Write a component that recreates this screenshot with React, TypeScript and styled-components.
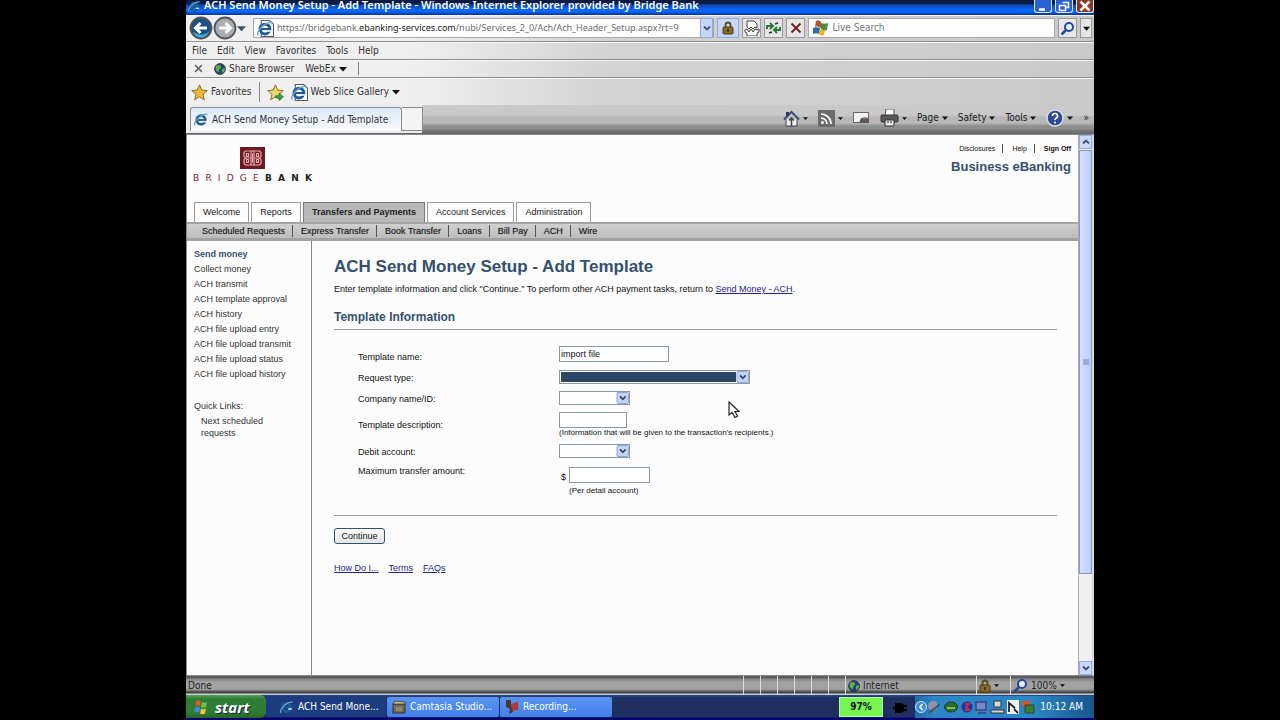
import React from 'react';
import styled, { createGlobalStyle } from 'styled-components';

const ui = '"DejaVu Sans Condensed", "DejaVu Sans", "Noto Sans", sans-serif';
const noto = '"Noto Sans", "Open Sans", sans-serif';
const arial = '"Liberation Sans", Arial, sans-serif';
const navy = '#34506f';

const GlobalStyle = createGlobalStyle`
  *, *::before, *::after { box-sizing: border-box; }
  body { margin: 0; background: #000; }
  button, input, select { font: inherit; color: inherit; margin: 0; }
  svg { display: block; flex: none; }
`;

/* ---------- desktop and window ---------- */

const Desktop = styled.div`
  min-height: 100vh;
  padding: 0 186px;
  background: #000;
  display: flex;
  flex-direction: column;
  overflow: hidden;
  font-family: ${ui};
  font-size: 10px;
  line-height: 14px;
  color: #333;
`;

const TitleBar = styled.header`
  height: 15px;
  display: flex;
  align-items: flex-start;
  gap: 3px;
  padding-left: 2px;
  background: linear-gradient(#0a1c44 0 4px, #0d4fc4 5px 7px, #0a66f8 9px 12px, #0a3aa8 14px);
`;

const TitleText = styled.h1`
  flex: 1;
  margin: 0;
  font-family: ${noto};
  font-size: 11px;
  line-height: 9px;
  font-weight: 600;
  color: #fff;
  white-space: nowrap;
`;

const WindowButtons = styled.div`
  display: flex;
  gap: 3px;
`;

const WindowButton = styled.button<{ $close?: boolean }>`
  width: 18px;
  height: 13px;
  padding: 0;
  display: grid;
  place-items: center;
  border: 1px solid #dfe8f8;
  border-top: 0;
  border-radius: 0 0 3px 3px;
  background: ${(p) => (p.$close ? '#8e3320' : '#2a62d4')};
`;

const Bar = styled.div<{ $h: number }>`
  height: ${(p) => p.$h}px;
  display: flex;
  align-items: center;
  background: linear-gradient(90deg, #efefef 0 25%, #d4d4d4 45%, #c9c9c9);
  border-bottom: 1px solid #8e8e8e;
  box-shadow: inset 0 1px #f8f8f8;
  white-space: nowrap;
`;

const NavBar = styled(Bar)`
  padding: 0 2px 0 3px;
  gap: 3px;
`;

const ToolButton = styled.button<{ $lit?: boolean; $w?: number }>`
  width: ${(p) => p.$w ?? 19}px;
  height: 20px;
  padding: 0;
  display: grid;
  place-items: center;
  flex: none;
  border: 1px solid ${(p) => (p.$lit ? '#8fa9dd' : '#9a9a9a')};
  background: ${(p) => (p.$lit ? '#c5d8fb' : '#e6e6e6')};
`;

const PlainButton = styled.button`
  padding: 0;
  border: 0;
  background: none;
  display: flex;
  align-items: center;
  gap: 3px;
`;

const HistoryButtons = styled.div`
  display: flex;
  align-items: center;
  width: 61px;
`;

const Field = styled.label<{ $grow: number }>`
  flex: ${(p) => p.$grow} 1 0;
  min-width: 0;
  height: 20px;
  display: flex;
  align-items: center;
  gap: 3px;
  padding-left: 3px;
  background: #fdfdfd;
  border: 1px solid #a9a9a9;
`;

const Address = styled.div`
  flex: 1;
  min-width: 0;
  font-family: ${noto};
  font-size: 9px;
  color: #6c6c6c;
  b { font-weight: 400; color: #222; }
`;

const SearchInput = styled.input`
  flex: 1;
  min-width: 0;
  padding: 0;
  border: 0;
  outline: 0;
  background: none;
  &::placeholder { color: #777; opacity: 1; }
`;

const MenuBar = styled(Bar)`
  padding: 1px 0 0 6px;
  gap: 10px;
`;

const ShareBar = styled(Bar)`
  padding-left: 8px;
  gap: 11px;
`;

const Divider = styled.span<{ $h: number }>`
  width: 1px;
  height: ${(p) => p.$h}px;
  background: #888;
`;

const FavoritesBar = styled(Bar)`
  padding: 1px 0 0 5px;
  gap: 7px;
  border-bottom: 0;
`;

const TabBar = styled.div`
  height: 29px;
  display: flex;
  align-items: flex-end;
  background:
    linear-gradient(90deg, #ececec 0 26%, transparent 26%),
    linear-gradient(#c9c9c9 0 10px, #b8b8b8 12px 18px, #8e8e8e 21px 24px, #707070 26px);
  border-bottom: 1px solid #666;
  padding: 0 0 2px 4px;
`;

const BrowserTab = styled.div`
  width: 212px;
  flex: none;
  height: 24px;
  display: flex;
  align-items: center;
  gap: 3px;
  padding-left: 3px;
  white-space: nowrap;
  background: linear-gradient(#dde9fc, #fafcff);
  border: 1px solid #8b8b8b;
  border-bottom: 0;
  border-radius: 3px 3px 0 0;
`;

const NewTab = styled.button`
  width: 21px;
  height: 24px;
  padding: 0;
  background: #f3f3f3;
  border: 1px solid #8b8b8b;
  border-left: 0;
`;

const Commands = styled.div`
  flex: 1;
  align-self: center;
  display: flex;
  align-items: center;
  justify-content: flex-end;
  gap: 10px;
  padding-right: 5px;
  color: #222;
`;

/* ---------- page ---------- */

const Viewport = styled.div`
  flex: 1;
  display: flex;
  background: #fcfcfc;
  border: 1px solid #888;
  border-right: 2px solid #d8d8d8;
`;

const Page = styled.div`
  flex: 1;
  min-width: 0;
  display: flex;
  flex-direction: column;
  font-family: ${arial};
  color: #222;
`;

const Masthead = styled.header`
  display: flex;
  justify-content: space-between;
  height: 67px;
  padding: 12px 7px 0 6px;
`;

const Brand = styled.div`
  width: 119px;
  display: flex;
  flex-direction: column;
  align-items: center;
  gap: 4px;
`;

const BrandName = styled.div`
  display: flex;
  justify-content: space-between;
  width: 119px;
  font-family: "DejaVu Sans", sans-serif;
  font-size: 9px;
  line-height: 11px;
  color: #7a2630;
  b { font-weight: 700; color: #222; }
`;

const Utility = styled.div`
  display: flex;
  flex-direction: column;
  align-items: flex-end;
`;

const UtilityLinks = styled.nav`
  display: flex;
  font-size: 7px;
  line-height: 9px;
  margin-top: -3px;
  a { color: #111; text-decoration: none; }
  a + a { margin-left: 7px; padding-left: 9px; border-left: 1px solid #555; }
  a:last-child { font-weight: 700; }
`;

const Product = styled.div`
  margin-top: 6px;
  font-size: 13px;
  line-height: 16px;
  font-weight: 700;
  color: ${navy};
`;

const Tabs = styled.nav`
  display: flex;
  align-items: flex-end;
  gap: 2px;
  padding-left: 7px;
`;

const TabLink = styled.a<{ $on?: boolean }>`
  height: 20px;
  padding: 0 8px;
  line-height: 19px;
  font-size: 9px;
  text-decoration: none;
  white-space: nowrap;
  color: #222;
  border: 1px solid #999;
  border-bottom: 0;
  ${(p) => p.$on && 'background: #b9b9b9; font-weight: 700; border-color: #777;'}
`;

const SubNav = styled.nav`
  display: flex;
  align-items: center;
  height: 19px;
  padding-left: 7px;
  font-size: 9px;
  line-height: 12px;
  background: linear-gradient(#cfcfcf, #bdbdbd);
  border-top: 2px solid #a4a4a4;
  border-bottom: 3px solid #a2a2a2;
  a { padding: 0 7px 0 8px; color: #222; text-decoration: none; text-shadow: 0 0 1px #777; white-space: nowrap; }
  a + a { border-left: 1px solid #555; }
`;

const Columns = styled.div`
  flex: 1;
  display: flex;
`;

const Sidebar = styled.aside`
  width: 125px;
  flex: none;
  padding: 6px 0 0 7px;
  border-right: 1px solid #888;
  font-size: 9px;
  line-height: 15px;
`;

const SideList = styled.ul`
  list-style: none;
  margin: 0;
  padding: 0;
  a { color: #333; text-decoration: none; white-space: nowrap; }
  a[aria-current] { font-weight: 700; color: ${navy}; }
`;

const QuickLinks = styled.div`
  margin-top: 17px;
  color: #333;
  a { display: block; margin: 1px 0 0 7px; width: 70px; line-height: 12px; color: inherit; text-decoration: none; }
`;

const Content = styled.main`
  flex: 1;
  min-width: 0;
  padding: 16px 21px 0 22px;
  font-size: 9px;
  line-height: 14px;
  color: #111;
  a { color: #23238c; }
`;

const Heading = styled.h2`
  margin: 0;
  font-size: 17px;
  line-height: 20px;
  font-weight: 700;
  color: ${navy};
`;

const Intro = styled.p`
  margin: 5px 0 13px;
`;

const Section = styled.h3`
  margin: 0;
  padding-bottom: 4px;
  font-size: 12px;
  line-height: 16px;
  font-weight: 700;
  color: ${navy};
  border-bottom: 1px solid #999;
`;

const Form = styled.form`
  margin: 0;
`;

const Rows = styled.div`
  padding: 16px 0 19px 24px;
  border-bottom: 1px solid #999;
`;

const FormRow = styled.div<{ $h: number; $labelTop: number }>`
  display: grid;
  grid-template-columns: 201px 1fr;
  align-items: start;
  height: ${(p) => p.$h}px;
  & > label { padding-top: ${(p) => p.$labelTop}px; }
`;

const TextInput = styled.input<{ $w: number }>`
  display: block;
  width: ${(p) => p.$w}px;
  height: 16px;
  padding: 0 1px;
  border: 1px solid #8a99a8;
  border-radius: 0;
  background: #fff;
  outline: 0;
`;

const Hint = styled.div`
  font-size: 8px;
  line-height: 10px;
  white-space: nowrap;
`;

const Money = styled.div`
  display: grid;
  grid-template-columns: 10px auto;
  justify-content: start;
  padding-top: 3px;
  & > span { padding: 3px 0 0 2px; }
  & > ${Hint} { grid-column: 2; padding-top: 2px; }
`;

const SelectBox = styled.div<{ $w: number }>`
  display: grid;
  width: ${(p) => p.$w}px;
  height: 14px;
  border: 1px solid #8a99a8;
  background: #fff;
  & > * { grid-area: 1 / 1; }
  & > svg { justify-self: end; pointer-events: none; }
`;

const Select = styled.select<{ $active?: boolean }>`
  appearance: none;
  width: 100%;
  height: 12px;
  padding: 1px 13px 1px 1px;
  border: 0;
  border-radius: 0;
  outline: 0;
  background: ${(p) => (p.$active ? '#2c4669' : '#fff')} content-box;
`;

const Submit = styled.button`
  display: block;
  width: 51px;
  height: 16px;
  margin: 12px 0 17px;
  padding: 0;
  line-height: 12px;
  border: 1px solid #34506f;
  border-radius: 3px;
  background: linear-gradient(#fff, #e4e4e4);
`;

const FootLinks = styled.nav`
  display: flex;
  gap: 10px;
`;

const PointerHost = styled.div`
  position: relative;
`;

const Pointer = styled.svg`
  position: absolute;
  left: 169px;
  top: 31px;
`;

const ScrollTrack = styled.div`
  width: 14px;
  flex: none;
  display: flex;
  flex-direction: column;
  background: #f0f0f0;
  border-left: 1px solid #aaa;
`;

const ScrollButton = styled.button`
  height: 14px;
  padding: 0;
  display: grid;
  place-items: center;
  border: 1px solid #94abe0;
  background: #c9d8fc;
`;

const ScrollThumb = styled.div`
  flex: 421 1 0;
  display: grid;
  place-items: center;
  margin-top: 1px;
  background: linear-gradient(90deg, #d3dffe, #bccdfb);
  border: 1px solid #8698cc;
`;

const ScrollRest = styled.div`
  flex: 87 1 0;
`;

/* ---------- status bar and taskbar ---------- */

const StatusBar = styled.footer`
  height: 19px;
  display: flex;
  align-items: stretch;
  line-height: 15px;
  color: #222;
  background: linear-gradient(#5c5c5c 0 2px, #8c8c8c 3px 4px, #a2a2a2 6px 13px, #8c8c8c 14px, #454545 16px 17px, #c8ccd4 18px);
`;

const StatusCell = styled.div<{ $w?: number }>`
  ${(p) => (p.$w ? `width: ${p.$w}px; border-left: 1px solid #ddd;` : 'flex: 1;')}
  display: flex;
  align-items: center;
  gap: 3px;
  padding-left: 2px;
  overflow: hidden;
`;

const Taskbar = styled.nav`
  height: 25px;
  display: flex;
  align-items: stretch;
  color: #fff;
  white-space: nowrap;
  background: linear-gradient(#2a4b8c 0, #1e2f60 3px 22px, #04046c 23px);
`;

const Start = styled.button`
  width: 80px;
  margin-bottom: 2px;
  display: flex;
  align-items: center;
  gap: 6px;
  padding: 0 0 0 7px;
  border: 0;
  border-radius: 0 6px 6px 0;
  background: linear-gradient(#5aa05a, #2f7d34 4px 18px, #24602a);
  color: #fff;
  font-family: "Open Sans", sans-serif;
  font-size: 15px;
  font-style: italic;
  font-weight: 700;
  text-shadow: 1px 1px 1px #123;
`;

const Task = styled.button<{ $on?: boolean }>`
  width: ${(p) => (p.$on ? 120 : 112)}px;
  margin: 2px 1px 3px 0;
  display: flex;
  align-items: center;
  gap: 4px;
  padding: 0 0 0 ${(p) => (p.$on ? 14 : 5)}px;
  border: 0;
  border-radius: 2px;
  background: ${(p) => (p.$on ? '#1d3c80' : 'linear-gradient(#5a94f0, #4380e8)')};
  color: #fff;
`;

const Battery = styled.div`
  width: 44px;
  margin: 2px 10px 3px auto;
  display: grid;
  place-items: center;
  background: #76f650;
  border: 1px solid #b7f9a0;
  color: #111;
  font-weight: 700;
`;

const PowerSlot = styled.div`
  display: grid;
  place-items: center;
`;

const Tray = styled.div`
  display: flex;
  align-items: center;
  width: 179px;
  margin: 1px 0 2px 6px;
  padding-right: 11px;
  background: linear-gradient(90deg, #1e6ca8 0, #2a86c4 20px 120px, #17558e);
  time { margin-left: auto; }
`;

/* ---------- drawings ---------- */

const IeIcon = ({ size = 15, page }: { size?: number; page?: boolean }) => (
  <svg width={size} height={size} viewBox="0 0 16 16" aria-hidden="true">
    {page && <path d="M4 .5h8l3.500 3.500v11.500H4z" fill="#fff" stroke="#555" />}
    <circle cx="7.500" cy="8.500" r="4.600" fill="none" stroke="#1f5c94" strokeWidth="2.800" />
    <path d="M4 8.500h8" stroke="#1f5c94" strokeWidth="2" />
    <path d="M9.500 10.300h4" stroke="#e6f0fa" strokeWidth="1.600" />
    <path d="M1 14.500C-1 11 8 1 14.500 2.500" fill="none" stroke="#6aa5cf" strokeWidth="1.400" />
  </svg>
);

const Caret = ({ color = '#111', size = 7 }: { color?: string; size?: number }) => (
  <svg width={size} height={size} viewBox="0 0 8 8" aria-hidden="true">
    <path d="M0 2h8L4 6.500z" fill={color} />
  </svg>
);

const Chevron = ({ up }: { up?: boolean }) => (
  <svg width="8" height="8" viewBox="0 0 8 8" aria-hidden="true">
    <path d={up ? 'M1 5.500 4 2.500 7 5.500' : 'M1 2.500 4 5.500 7 2.500'} fill="none" stroke="#3d4f7c" strokeWidth="1.800" />
  </svg>
);

const SelectArrow = () => (
  <svg width="13" height="12" viewBox="0 0 13 12" aria-hidden="true">
    <rect x="1" y=".5" width="11.500" height="11" rx="1" fill="#c3d3f8" stroke="#8fa6dc" />
    <path d="M4 4.300 6.800 7.300 9.600 4.300" fill="none" stroke="#34466e" strokeWidth="1.700" />
  </svg>
);

const RoundArrow = ({ forward }: { forward?: boolean }) => (
  <svg width="24" height="24" viewBox="0 0 24 24" aria-hidden="true">
    <circle cx="12" cy="12" r="10.500" fill={forward ? '#a9adb3' : '#1c4f88'} stroke="#555" strokeWidth="1.800" />
    {!forward && <path d="M4 15c4 5 12 5 16 0-1 4-4 6.500-8 6.500S5 19 4 15z" fill="#35b4d8" />}
    <path
      d={forward ? 'M6 12h11M12.500 7l5 5-5 5' : 'M18 12H7M11.500 7l-5 5 5 5'}
      fill="none"
      stroke="#fff"
      strokeWidth="3"
    />
  </svg>
);

const Star = ({ add }: { add?: boolean }) => (
  <svg width="17" height="17" viewBox="0 0 16 16" aria-hidden="true">
    <path
      d="M8 .8l2.100 5 5.200.4-4 3.500 1.300 5.200L8 12l-4.600 2.900 1.300-5.200-4-3.500 5.200-.4z"
      fill={add ? '#e9d873' : '#f6b93a'}
      stroke="#8a6a20"
      strokeWidth=".9"
    />
    {add && <path d="M8 11h3.500V8.500L15.500 12l-4 3.500V13H8z" fill="#3fa045" stroke="#1f6428" strokeWidth=".6" />}
  </svg>
);

const Globe = () => (
  <svg width="12" height="12" viewBox="0 0 12 12" aria-hidden="true">
    <circle cx="6" cy="6" r="5.400" fill="#24467c" stroke="#222" strokeWidth=".8" />
    <path d="M2 3c2-2 5-1 5 1S4 6 5 9c-3 0-4-3-3-6zM8 6l3-1c0 3-1 4-3 5z" fill="#5ab04a" />
  </svg>
);

const Padlock = () => (
  <svg width="12" height="14" viewBox="0 0 12 14" aria-hidden="true">
    <path d="M3.500 6.500V4a2.500 2.500 0 0 1 5 0v2.500" fill="none" stroke="#5b4a22" strokeWidth="1.800" />
    <rect x="1" y="6" width="10" height="7" rx="1" fill="#8a6a24" stroke="#4d3c16" />
    <path d="M6 8v3" stroke="#2c220c" strokeWidth="1.500" />
  </svg>
);

const BrokenPage = () => (
  <svg width="16" height="16" viewBox="0 0 16 16" aria-hidden="true">
    <path d="M3 7V1h7l3 3v4l-2-1-2 2-2-2-2 2z" fill="#fff" stroke="#444" />
    <path d="M1 10l2-1 2 3 2-3 2 3 2-3 2 1 2-1v3l-2 1v3H3v-3l-2-1z" fill="#fff" stroke="#444" />
  </svg>
);

const Refresh = () => (
  <svg width="17" height="16" viewBox="0 0 17 16" aria-hidden="true">
    <path d="M2 9V6h5M5 3l3 3-3 3" stroke="#2c7a35" strokeWidth="2" fill="none" />
    <path d="M15 7v3h-5M12 7l-3 3 3 3" stroke="#2c7a35" strokeWidth="2" fill="none" />
    <path d="M10 4l3-1M4 13l3-1" stroke="#333" strokeWidth="1.500" />
  </svg>
);

const Cross = ({ color, size, w = 2 }: { color: string; size: number; w?: number }) => (
  <svg width={size} height={size} viewBox="0 0 12 12" aria-hidden="true">
    <path d="M1.500 1.500l9 9M10.500 1.500l-9 9" stroke={color} strokeWidth={w} />
  </svg>
);

const LiveLogo = () => (
  <svg width="17" height="17" viewBox="0 0 17 17" aria-hidden="true">
    <path d="M4 1c2-1 4 0 5 1v6C7 7 5 6 3 7z" fill="#b5532c" />
    <path d="M9 3c2 1 5 1 7 0l-1 7c-2 1-4 0-6-1z" fill="#4c8a3c" />
    <path d="M1 8c2-1 5-1 7 0l-1 6c-2-1-4-1-6 0z" fill="#2c6da8" />
    <path d="M8 9c2 1 4 1 5 1l-1 5c-2 1-4 0-5-1z" fill="#e8b420" />
  </svg>
);

const Magnifier = () => (
  <svg width="15" height="15" viewBox="0 0 15 15" aria-hidden="true">
    <circle cx="9" cy="6" r="4" fill="#e8f0ff" stroke="#25479c" strokeWidth="2" />
    <path d="M6 9l-4.500 4.500" stroke="#25479c" strokeWidth="2.500" />
  </svg>
);

const House = () => (
  <svg width="17" height="17" viewBox="0 0 17 17" aria-hidden="true">
    <path d="M3 9v7h11V9" fill="#eee" stroke="#444" />
    <path d="M1 9.500 8.500 2 16 9.500" fill="none" stroke="#444b6c" strokeWidth="2" />
    <path d="M3 2h3v3L3 7z" fill="#34347a" />
    <path d="M8.500 16V8M6 10.500 8.500 8l2.500 2.500" fill="none" stroke="#39425c" strokeWidth="1.500" />
  </svg>
);

const Feed = () => (
  <svg width="17" height="17" viewBox="0 0 17 17" aria-hidden="true">
    <rect width="17" height="17" rx="1" fill="#6b6b6b" />
    <circle cx="4.500" cy="12.500" r="1.500" fill="#fff" />
    <path d="M3 8a6 6 0 0 1 6 6M3 4a10 10 0 0 1 10 10" fill="none" stroke="#fff" strokeWidth="1.700" />
  </svg>
);

const MailIcon = () => (
  <svg width="17" height="13" viewBox="0 0 17 13" aria-hidden="true">
    <rect x=".5" y=".5" width="15" height="10" fill="#f4f4f4" stroke="#666" />
    <path d="M8 6h8v5H6z" fill="#5a5a5a" />
    <path d="M10 6h4" stroke="#b66" strokeWidth="1.500" />
  </svg>
);

const Printer = () => (
  <svg width="19" height="18" viewBox="0 0 19 18" aria-hidden="true">
    <path d="M6 0h8v7H5z" fill="#fff" stroke="#555" />
    <rect x="1" y="6" width="17" height="7" rx="1" fill="#5a5a5a" stroke="#333" />
    <path d="M5 11h9v6H5z" fill="#e8e8e8" stroke="#333" />
    <path d="M8 12v2M11 12v2" stroke="#222" />
  </svg>
);

const HelpIcon = () => (
  <svg width="18" height="18" viewBox="0 0 18 18" aria-hidden="true">
    <circle cx="9" cy="9" r="8" fill="#2f4a93" stroke="#d9dee8" strokeWidth="1.400" />
    <path d="M6.500 7a2.500 2.500 0 1 1 3.500 2.300c-.8.400-1 .9-1 1.700M9 12.500v2" fill="none" stroke="#fff" strokeWidth="1.700" />
  </svg>
);

const BankMark = () => (
  <svg width="25" height="22" viewBox="0 0 25 22" aria-hidden="true">
    <rect width="25" height="22" fill="#6e1a24" />
    <g fill="none" stroke="#e3a8ac" strokeWidth="1.200">
      <path d="M11 4H5.500L4 5.500v4L5.500 11 4 12.500v4L5.500 18H11zM6.500 6.500h2v3h-2zM6.500 12.500h2v3h-2zM5.500 11H11" />
      <path d="M14 4h5.500L21 5.500v4L19.500 11l1.500 1.500v4L19.500 18H14zM16.500 6.500h2v3h-2zM16.500 12.500h2v3h-2zM14 11h5.500" />
      <path d="M11 4h3M11 18h3M12.500 6.500v9" />
    </g>
  </svg>
);

const Flag = () => (
  <svg width="16" height="16" viewBox="0 0 16 16" aria-hidden="true">
    <path d="M3 2c2-1 3-1 5 0L7 7C5 6 4 6 2 7z" fill="#e0572c" />
    <path d="M9 3c2 1 3 1 5 0l-1 5c-2 1-3 1-5 0z" fill="#6cc04a" />
    <path d="M2 8.500c2-1 3-1 5 0l-1 5c-2-1-3-1-5 0z" fill="#4a86e0" />
    <path d="M8 9.500c2 1 3 1 5 0l-1 5c-2 1-3 1-5 0z" fill="#f2c230" />
  </svg>
);

const Clapper = () => (
  <svg width="14" height="14" viewBox="0 0 14 14" aria-hidden="true">
    <rect x="1" y="4" width="12" height="9" fill="#6f6a52" stroke="#333" />
    <path d="M1 4l2-3 10 1v2z" fill="#c8bd8a" stroke="#333" strokeWidth=".7" />
    <path d="M4 7h6v4H4z" fill="#8f8a6a" />
  </svg>
);

const Camera = () => (
  <svg width="14" height="16" viewBox="0 0 14 16" aria-hidden="true">
    <path d="M1 1h5v5l2 2v5L4 15l1-5-4-2z" fill="#4a3838" />
    <path d="M6 5l7-2v8l-6 1z" fill="#a83c34" />
  </svg>
);

const Plug = () => (
  <svg width="16" height="12" viewBox="0 0 16 12" aria-hidden="true">
    <path d="M0 6h3M3 2h5c3 0 3 8 0 8H3zM9 4h5M9 8h5" fill="#000" stroke="#000" strokeWidth="2" />
  </svg>
);

const TrayIcons = () => (
  <svg width="120" height="18" viewBox="0 0 120 18" aria-hidden="true">
    <circle cx="6" cy="9" r="5.500" fill="#3b8fe0" stroke="#cfe6fb" />
    <path d="M7.500 6 5 9l2.500 3" fill="none" stroke="#fff" strokeWidth="1.500" />
    <circle cx="18" cy="8" r="5" fill="#8a92ac" />
    <path d="M14 15c3-4 8-4 10-9" stroke="#4a4f66" strokeWidth="2" fill="none" />
    <ellipse cx="36" cy="9" rx="6.500" ry="5" fill="#2f6a34" stroke="#1b3a24" />
    <path d="M32 10h8" stroke="#7fc24c" strokeWidth="2" />
    <circle cx="52" cy="9" r="5.500" fill="#2a2f9c" />
    <path d="M50 6h4l-3 3 3 3h-4" stroke="#c4304c" strokeWidth="1.800" fill="none" />
    <path d="M61 4h10v8H61zM63 15h8" fill="#7a86c8" stroke="#3c4488" strokeWidth="1.500" />
    <path d="M79 3h7v6h-7zM76 12h13v3H76z" fill="#d8d8d8" stroke="#333" />
    <path d="M92 2h12v14H92z" fill="#f0f0f0" />
    <path d="M94 14V5l6 5M99 11l4 4" stroke="#222" strokeWidth="1.800" fill="none" />
    <path d="M107 3h8v6h-8z" fill="#d8542c" />
    <path d="M110 7h9v8h-9z" fill="#3c7a3c" stroke="#234a24" />
  </svg>
);

/* ---------- app ---------- */

const sideItems = [
  'Send money', 'Collect money', 'ACH transmit', 'ACH template approval', 'ACH history',
  'ACH file upload entry', 'ACH file upload transmit', 'ACH file upload status', 'ACH file upload history',
];
const tabs = ['Welcome', 'Reports', 'Transfers and Payments', 'Account Services', 'Administration'];
const subTabs = ['Scheduled Requests', 'Express Transfer', 'Book Transfer', 'Loans', 'Bill Pay', 'ACH', 'Wire'];

const Dropdown = ({ id, width, active }: { id: string; width: number; active?: boolean }) => (
  <SelectBox $w={width}>
    <Select id={id} $active={active} defaultValue="">
      <option value="" />
    </Select>
    <SelectArrow />
  </SelectBox>
);

const BrowserChrome = () => (
  <>
    <TitleBar>
      <IeIcon size={13} />
      <TitleText>ACH Send Money Setup - Add Template - Windows Internet Explorer provided by Bridge Bank</TitleText>
      <WindowButtons>
        <WindowButton aria-label="Minimize"><svg width="12" height="11"><path d="M2 8.500h6" stroke="#fff" strokeWidth="2.500" /></svg></WindowButton>
        <WindowButton aria-label="Restore"><svg width="12" height="11"><path d="M4.500 1.500h6v5h-2M1.500 4.500h6v5h-6z" fill="none" stroke="#fff" strokeWidth="1.600" /></svg></WindowButton>
        <WindowButton $close aria-label="Close"><Cross color="#fff" size={12} w={2.5} /></WindowButton>
      </WindowButtons>
    </TitleBar>
    <NavBar $h={27}>
      <HistoryButtons>
        <PlainButton aria-label="Back"><RoundArrow /></PlainButton>
        <PlainButton aria-label="Forward"><RoundArrow forward /></PlainButton>
        <PlainButton aria-label="Recent pages"><Caret color="#34506f" size={9} /></PlainButton>
      </HistoryButtons>
      <Field as="div" $grow={463}>
        <IeIcon size={17} page />
        <Address>https://bridgebank.<b>ebanking-services.com</b>/nubi/Services_2_0/Ach/Ach_Header_Setup.aspx?rt=9</Address>
        <ToolButton $lit $w={13} aria-label="Show addresses"><Chevron /></ToolButton>
      </Field>
      <ToolButton $lit $w={22} aria-label="Security report"><Padlock /></ToolButton>
      <ToolButton aria-label="Compatibility view"><BrokenPage /></ToolButton>
      <ToolButton aria-label="Refresh"><Refresh /></ToolButton>
      <ToolButton aria-label="Stop"><Cross color="#6e2424" size={12} /></ToolButton>
      <Field $grow={245}>
        <LiveLogo />
        <SearchInput aria-label="Live Search" placeholder="Live Search" />
      </Field>
      <ToolButton aria-label="Search"><Magnifier /></ToolButton>
      <ToolButton $w={12} aria-label="Search options"><Caret /></ToolButton>
    </NavBar>
    <MenuBar $h={18}>
      {['File', 'Edit', 'View', 'Favorites', 'Tools', 'Help'].map((m) => <PlainButton key={m}>{m}</PlainButton>)}
    </MenuBar>
    <ShareBar $h={18}>
      <PlainButton aria-label="Close toolbar"><Cross color="#666" size={9} /></PlainButton>
      <PlainButton><Globe />Share Browser</PlainButton>
      <PlainButton>WebEx<Caret size={8} /></PlainButton>
      <Divider $h={13} />
    </ShareBar>
    <FavoritesBar $h={27}>
      <PlainButton><Star />Favorites</PlainButton>
      <Divider $h={20} />
      <PlainButton aria-label="Add to Favorites Bar"><Star add /></PlainButton>
      <PlainButton><IeIcon size={17} page />Web Slice Gallery<Caret size={8} /></PlainButton>
    </FavoritesBar>
    <TabBar>
      <BrowserTab><IeIcon size={15} />ACH Send Money Setup - Add Template</BrowserTab>
      <NewTab aria-label="New tab" />
      <Commands>
        <PlainButton aria-label="Home"><House /><Caret size={5} /></PlainButton>
        <PlainButton aria-label="Feeds"><Feed /><Caret size={5} /></PlainButton>
        <PlainButton aria-label="Read mail"><MailIcon /></PlainButton>
        <PlainButton aria-label="Print"><Printer /><Caret size={5} /></PlainButton>
        <PlainButton>Page<Caret size={6} /></PlainButton>
        <PlainButton>Safety<Caret size={6} /></PlainButton>
        <PlainButton>Tools<Caret size={6} /></PlainButton>
        <PlainButton aria-label="Help"><HelpIcon /><Caret size={6} /></PlainButton>
        <PlainButton aria-label="More commands">»</PlainButton>
      </Commands>
    </TabBar>
  </>
);

const TemplateForm = () => (
  <Form onSubmit={(e) => e.preventDefault()}>
    <Rows>
      <FormRow $h={24} $labelTop={4}>
        <label htmlFor="name">Template name:</label>
        <TextInput id="name" $w={110} defaultValue="import file" />
      </FormRow>
      <FormRow $h={21} $labelTop={1}>
        <label htmlFor="type">Request type:</label>
        <PointerHost>
          <Dropdown id="type" width={191} active />
          <Pointer width="12" height="18" viewBox="0 0 12 18" aria-hidden="true">
            <path d="M1 1v13l3-2.500 3 5 2.500-1.500-2.500-4.500h4z" fill="#fff" stroke="#222" strokeWidth="1.200" />
          </Pointer>
        </PointerHost>
      </FormRow>
      <FormRow $h={21} $labelTop={1}>
        <label htmlFor="company">Company name/ID:</label>
        <Dropdown id="company" width={71} />
      </FormRow>
      <FormRow $h={32} $labelTop={6}>
        <label htmlFor="description">Template description:</label>
        <div>
          <TextInput id="description" $w={68} />
          <Hint>(Information that will be given to the transaction's recipients.)</Hint>
        </div>
      </FormRow>
      <FormRow $h={20} $labelTop={1}>
        <label htmlFor="debit">Debit account:</label>
        <Dropdown id="debit" width={71} />
      </FormRow>
      <FormRow $h={32} $labelTop={0}>
        <label htmlFor="amount">Maximum transfer amount:</label>
        <Money>
          <span>$</span>
          <TextInput id="amount" $w={81} />
          <Hint>(Per detail account)</Hint>
        </Money>
      </FormRow>
    </Rows>
    <Submit type="submit">Continue</Submit>
  </Form>
);

export default function App() {
  return (
    <Desktop>
      <GlobalStyle />
      <BrowserChrome />
      <Viewport>
        <Page>
          <Masthead>
            <Brand>
              <BankMark />
              <BrandName aria-label="Bridge Bank">
                {[...'BRIDGE'].map((c, i) => <span key={i}>{c}</span>)}
                {[...'BANK'].map((c, i) => <b key={i}>{c}</b>)}
              </BrandName>
            </Brand>
            <Utility>
              <UtilityLinks><a href="#d">Disclosures</a><a href="#h">Help</a><a href="#s">Sign Off</a></UtilityLinks>
              <Product>Business eBanking</Product>
            </Utility>
          </Masthead>
          <Tabs>
            {tabs.map((t, i) => <TabLink key={t} href="#tab" $on={i === 2}>{t}</TabLink>)}
          </Tabs>
          <SubNav>{subTabs.map((t) => <a key={t} href="#sub">{t}</a>)}</SubNav>
          <Columns>
            <Sidebar>
              <SideList>
                {sideItems.map((t, i) => (
                  <li key={t}><a href="#side" aria-current={i === 0 ? 'page' : undefined}>{t}</a></li>
                ))}
              </SideList>
              <QuickLinks>Quick Links:<a href="#next">Next scheduled requests</a></QuickLinks>
            </Sidebar>
            <Content>
              <Heading>ACH Send Money Setup - Add Template</Heading>
              <Intro>
                Enter template information and click "Continue." To perform other ACH payment tasks, return to{' '}
                <a href="#ach">Send Money - ACH</a>.
              </Intro>
              <Section>Template Information</Section>
              <TemplateForm />
              <FootLinks><a href="#how">How Do I...</a><a href="#terms">Terms</a><a href="#faqs">FAQs</a></FootLinks>
            </Content>
          </Columns>
        </Page>
        <ScrollTrack>
          <ScrollButton aria-label="Scroll up"><Chevron up /></ScrollButton>
          <ScrollThumb><svg width="6" height="6"><path d="M0 1h6M0 3h6M0 5h6" stroke="#6a7fb8" /></svg></ScrollThumb>
          <ScrollRest />
          <ScrollButton aria-label="Scroll down"><Chevron /></ScrollButton>
        </ScrollTrack>
      </Viewport>
      <StatusBar>
        <StatusCell>Done</StatusCell>
        {[0, 1, 2, 3, 4, 5].map((n) => <StatusCell key={n} $w={17} />)}
        <StatusCell $w={131}><Globe />Internet</StatusCell>
        <StatusCell $w={34}><Padlock /><Caret size={5} /></StatusCell>
        <StatusCell $w={84}><Magnifier />100%<Caret size={5} /></StatusCell>
      </StatusBar>
      <Taskbar>
        <Start><Flag />start</Start>
        <Task $on><IeIcon size={14} />ACH Send Mone...</Task>
        <Task><Clapper />Camtasia Studio...</Task>
        <Task><Camera />Recording...</Task>
        <Battery>97%</Battery>
        <PowerSlot><Plug /></PowerSlot>
        <Tray><TrayIcons /><time>10:12 AM</time></Tray>
      </Taskbar>
    </Desktop>
  );
}
